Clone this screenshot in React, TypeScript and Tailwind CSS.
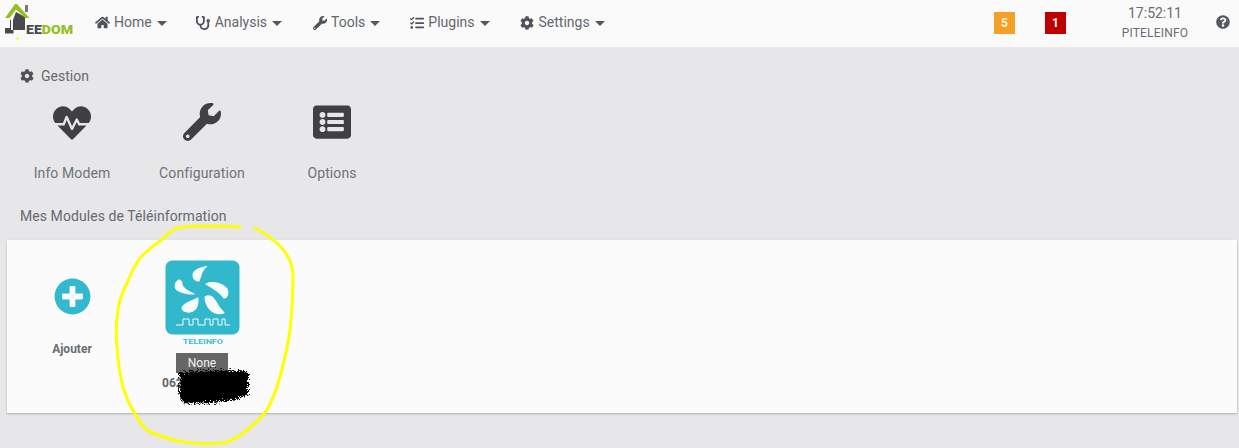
import React from "react";
import { FaHome, FaStethoscope, FaWrench, FaTasks, FaCog, FaHeartbeat, FaListAlt, FaQuestionCircle, FaPlusCircle } from "react-icons/fa";

const Caret = () => <span className="ml-[1px] w-0 h-0 border-x-[5px] border-x-transparent border-t-[5px] border-t-[#555a60] mt-[2px]" />;

function NavItem({ icon, label, className }: { icon: React.ReactNode; label: string; className: string }) {
  return (
    <div className={"flex items-center gap-1 text-[14px] text-[#62676d] " + className}>
      <span className="w-[15px] text-[#4f5359] flex items-center justify-center">{icon}</span>
      <span>{label}</span>
      <Caret />
    </div>
  );
}

function Logo() {
  return (
    <svg width="76" height="40" viewBox="0 0 76 40" className="absolute left-0 top-0">
      <path d="M25 5 H28 V12 H25 Z" fill="#77787c" />
      <path d="M16 12 L25 17 V30 H13 V20 Z" fill="#48494d" />
      <path d="M5 18 L15 4 H17 L29.5 18 H25.5 L16 9.5 L9.5 18 Z" fill="#93c11f" />
      <path d="M5 28 H10 V20 H13.5 V33.5 H5 Z" fill="#48494d" />
      <path d="M11 19 H13 V30 H11 Z" fill="#f4f4f4" />
      <text x="26" y="33.5" fontFamily="Roboto, sans-serif" fontSize="12" fontWeight="900" textLength="47" lengthAdjust="spacingAndGlyphs" fill="#4a4b4f">EE<tspan fill="#93c11f">DOM</tspan></text>
      <rect x="16" y="38" width="3" height="1" fill="#ffff00" />
      <rect x="17" y="37" width="1" height="3" fill="#ffff00" />
    </svg>
  );
}

function Action({ icon, label }: { icon: React.ReactNode; label: string }) {
  return (
    <div className="w-[130px] flex flex-col items-center">
      <div className="h-[50px] flex items-start text-[#403f44]">{icon}</div>
      <div className="mt-[9px] text-[14px] leading-[20px] tracking-[0.1px] text-[#6f7378]">{label}</div>
    </div>
  );
}

function TeleinfoImage() {
  return (
    <svg width="75" height="89" viewBox="0 0 75 89" className="blur-[0.3px]">
      <rect x="0.5" y="0.5" width="74" height="74" rx="7" fill="#32b8cd" />
      <g fill="#f7fbfb" stroke="#f7fbfb" strokeWidth="1.2" strokeLinejoin="round">
        <path d="M41.5 6.5 C36 8 29 9 28 15 C28 19 31 21 34 21 C36 17 36 10 41.5 6.5 Z" />
        <path d="M14 20 C9 23 9 29 14 31 C19 34 24 34 29 34 C24 32 19 30 17 25 C17 22 16 20 14 20 Z" />
        <path d="M41 24 C47 21 57 23 62 29 C64 33 62 38 59 38 C56 33 48 28 41 24 Z" />
        <path d="M33 38 C28 41 18 43 17 48 C18 52 24 53 28 51 C33 48 33 43 33 38 Z" />
        <path d="M40 37 C45 34 49 38 51 42 C53 46 56 50 59 53 C52 55 46 52 43 47 C41 44 40 41 40 37 Z" />
      </g>
      <path d="M11 65 H18 V59 H24 V65 H28 V59 H33 V65 H40 V59 H45 V65 H48 V59 H53 V65 H57 V59 H60 V65 H65" fill="none" stroke="#f7fbfb" strokeWidth="1" />
      <text x="18" y="84" textLength="40" lengthAdjust="spacingAndGlyphs" fontFamily="Roboto, sans-serif" fontSize="8" fontWeight="900" fill="#4fc4d6">TELEINFO</text>
    </svg>
  );
}

export default function App() {
  return (
    <div className="relative w-[1239px] h-[448px] overflow-hidden bg-[#e7e7e9] font-['Roboto',sans-serif]">
      <header className="relative h-[47px] bg-[#fafafa] flex items-center pb-[2px]">
        <Logo />
        <NavItem className="ml-[95px]" icon={<FaHome size={15} />} label="Home" />
        <NavItem className="ml-[29px]" icon={<FaStethoscope size={14} />} label="Analysis" />
        <NavItem className="ml-[30px]" icon={<FaWrench size={14} />} label="Tools" />
        <NavItem className="ml-[29px]" icon={<FaTasks size={14} />} label="Plugins" />
        <NavItem className="ml-[30px]" icon={<FaCog size={14} />} label="Settings" />
        <div className="ml-auto flex items-center">
          <span className="w-[21px] h-[22px] bg-[#f5a026] text-[#fbf3e4] text-[12px] font-bold flex items-center justify-center">5</span>
          <span className="ml-[30px] w-[21px] h-[22px] bg-[#bd0000] text-white text-[12px] font-bold flex items-center justify-center">1</span>
          <div className="ml-[45px] w-[88px] flex flex-col items-center text-[#6a6e73]">
            <span className="text-[14px] leading-[20px] mt-[-1px]">17:52:11</span>
            <span className="text-[12px] leading-[16px] mt-[2px] tracking-[0.2px]">PITELEINFO</span>
          </div>
          <FaQuestionCircle size={14} className="ml-[17px] mr-[9px] mt-[-2px] text-[#55585d]" />
        </div>
      </header>

      <main className="px-[7px]">
        <div className="mt-[19px] ml-[13px] flex items-center gap-[7px] text-[14px] leading-[20px] text-[#66696e]">
          <FaCog size={14} className="text-[#4f5157]" />
          <span>Gestion</span>
        </div>
        <div className="flex mt-[18px]">
          <Action icon={<FaHeartbeat size={38} />} label="Info Modem" />
          <Action icon={<FaWrench size={38} className="mt-[-1px]" />} label="Configuration" />
          <Action icon={<FaListAlt size={38} className="mt-[-1px]" />} label="Options" />
        </div>
        <div className="mt-[23px] ml-[13px] text-[14px] leading-[20px] tracking-[0.07px] text-[#66696e]">Mes Modules de Téléinformation</div>
        <section className="mt-[14px] h-[173px] w-[1230px] bg-[#fbfbfb] shadow-[0_1px_2px_rgba(0,0,0,0.25)] flex">
          <div className="w-[130px] flex flex-col items-center">
            <FaPlusCircle size={37} className="mt-[38px] text-[#33b8cd]" />
            <span className="mt-[26px] text-[12px] font-bold leading-[16px] text-[#6a6d72]">Ajouter</span>
          </div>
          <div className="w-[130px] flex flex-col items-center relative">
            <div className="mt-[20px] h-[89px]"><TeleinfoImage /></div>
            <span className="mt-[4px] w-[52px] h-[20px] bg-[#666666] text-[#f2f2f2] text-[12px] flex items-center justify-center">None</span>
            <span className="mt-[2px] w-[82px] ml-[2px] self-center text-[12px] font-bold leading-[16px] text-[#62656b]">062</span>
          </div>
        </section>
      </main>

      <svg width="1239" height="448" viewBox="0 0 1239 448" className="absolute inset-0 pointer-events-none">
        <defs>
          <filter id="rough"><feTurbulence baseFrequency="0.6" numOctaves="2" seed="3" /><feDisplacementMap in="SourceGraphic" scale="8" /></filter>
        </defs>
        <g filter="url(#rough)">
          <path d="M178 371 C195 368 230 367 246 370 L246 392 C235 400 200 403 181 401 L177 392 Z" fill="#000000" />
        </g>
        <path d="M240 227 C222 226 195 225 177 228 C168 232 165 237 160 241 C152 246 146 252 140 258 C133 268 130 276 127 283 C122 293 119 301 118 310 C116 322 116 336 117 347 C118 362 120 375 123 387 C127 400 131 408 137 417 C141 425 145 429 150 432 C160 436 172 440 183 442 C196 444 210 444 223 443 C232 441 240 436 247 430 C255 424 261 418 267 410 C273 399 277 388 280 377 C284 362 288 345 290 330 C292 312 293 292 293 273 C292 266 291 261 288 257 C284 250 279 244 273 240 C267 235 261 231 255 228" fill="none" stroke="#ffff00" strokeWidth="3" strokeLinecap="round" strokeLinejoin="round" />
      </svg>
    </div>
  );
}
